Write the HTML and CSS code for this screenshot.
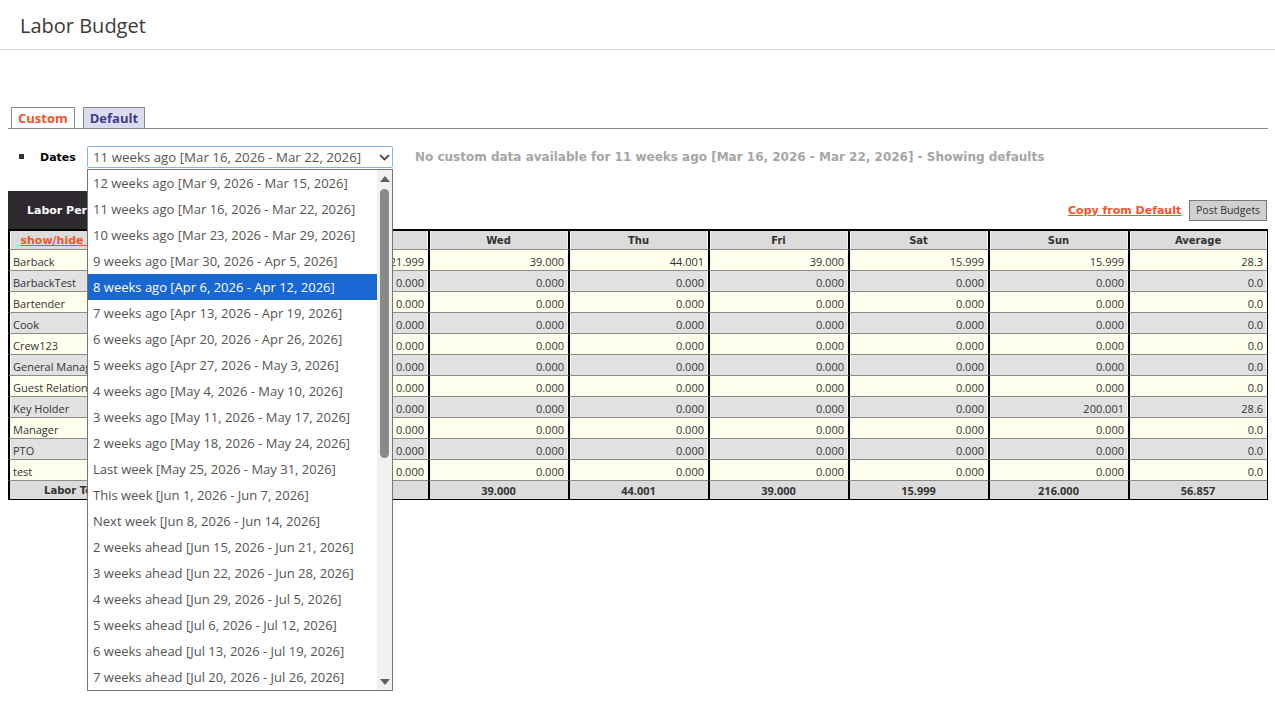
FILE: index.html
```html
<!DOCTYPE html>
<html lang="en">

<head>
    <meta charset="UTF-8">
    <title>Labor Budget</title>
    <link rel="stylesheet" href="styles.css">
</head>

<body>
    <header class="page-header">
        <h1>Labor Budget</h1>
    </header>

    <main class="content">
        <div class="tabs">
            <span class="tab tab-active">Custom</span>
            <span class="tab">Default</span>
        </div>

        <div class="dates-row">
            <span class="bullet"></span>
            <span class="dates-label">Dates</span>
            <div class="select-wrap">
                <div class="select">
                    <span>11 weeks ago [Mar 16, 2026 - Mar 22, 2026]</span>
                    <svg class="chevron" width="11" height="7" viewBox="0 0 11 7"><path d="M1 1.2l4.5 4.3 4.5-4.3" fill="none" stroke="#444" stroke-width="1.8"/></svg>
                </div>
                <div class="dropdown">
                    <ul class="options">
                        <li>12 weeks ago [Mar 9, 2026 - Mar 15, 2026]</li>
                        <li>11 weeks ago [Mar 16, 2026 - Mar 22, 2026]</li>
                        <li>10 weeks ago [Mar 23, 2026 - Mar 29, 2026]</li>
                        <li>9 weeks ago [Mar 30, 2026 - Apr 5, 2026]</li>
                        <li class="selected">8 weeks ago [Apr 6, 2026 - Apr 12, 2026]</li>
                        <li>7 weeks ago [Apr 13, 2026 - Apr 19, 2026]</li>
                        <li>6 weeks ago [Apr 20, 2026 - Apr 26, 2026]</li>
                        <li>5 weeks ago [Apr 27, 2026 - May 3, 2026]</li>
                        <li>4 weeks ago [May 4, 2026 - May 10, 2026]</li>
                        <li>3 weeks ago [May 11, 2026 - May 17, 2026]</li>
                        <li>2 weeks ago [May 18, 2026 - May 24, 2026]</li>
                        <li>Last week [May 25, 2026 - May 31, 2026]</li>
                        <li>This week [Jun 1, 2026 - Jun 7, 2026]</li>
                        <li>Next week [Jun 8, 2026 - Jun 14, 2026]</li>
                        <li>2 weeks ahead [Jun 15, 2026 - Jun 21, 2026]</li>
                        <li>3 weeks ahead [Jun 22, 2026 - Jun 28, 2026]</li>
                        <li>4 weeks ahead [Jun 29, 2026 - Jul 5, 2026]</li>
                        <li>5 weeks ahead [Jul 6, 2026 - Jul 12, 2026]</li>
                        <li>6 weeks ahead [Jul 13, 2026 - Jul 19, 2026]</li>
                        <li>7 weeks ahead [Jul 20, 2026 - Jul 26, 2026]</li>
                    </ul>
                    <div class="scrollbar">
                        <span class="arrow-up"></span>
                        <span class="thumb"></span>
                        <span class="arrow-down"></span>
                    </div>
                </div>
            </div>
            <span class="notice">No custom data available for 11 weeks ago [Mar 16, 2026 - Mar 22, 2026] - Showing defaults</span>
        </div>

        <table class="budget">
            <colgroup>
                <col><col><col><col><col><col><col><col><col>
            </colgroup>
            <tr class="top-row">
                <td class="personnel">Labor Personnel</td>
                <td class="actions" colspan="8">
                    <a href="#" class="copy-link">Copy from Default</a>
                    <button class="post-btn">Post Budgets</button>
                </td>
            </tr>
            <tr class="head-row">
                <th><a href="#" class="toggle-link">show/hide inactive</a></th>
                <th>Mon</th><th>Tue</th><th>Wed</th><th>Thu</th><th>Fri</th><th>Sat</th><th>Sun</th><th>Average</th>
            </tr>
            <tr class="odd">
                <td class="name">Barback</td>
                <td>22.001</td><td>21.999</td><td>39.000</td><td>44.001</td><td>39.000</td><td>15.999</td><td>15.999</td><td>28.3</td>
            </tr>
            <tr class="even">
                <td class="name">BarbackTest</td>
                <td>0.000</td><td>0.000</td><td>0.000</td><td>0.000</td><td>0.000</td><td>0.000</td><td>0.000</td><td>0.0</td>
            </tr>
            <tr class="odd">
                <td class="name">Bartender</td>
                <td>0.000</td><td>0.000</td><td>0.000</td><td>0.000</td><td>0.000</td><td>0.000</td><td>0.000</td><td>0.0</td>
            </tr>
            <tr class="even">
                <td class="name">Cook</td>
                <td>0.000</td><td>0.000</td><td>0.000</td><td>0.000</td><td>0.000</td><td>0.000</td><td>0.000</td><td>0.0</td>
            </tr>
            <tr class="odd">
                <td class="name">Crew123</td>
                <td>0.000</td><td>0.000</td><td>0.000</td><td>0.000</td><td>0.000</td><td>0.000</td><td>0.000</td><td>0.0</td>
            </tr>
            <tr class="even">
                <td class="name">General Manager</td>
                <td>0.000</td><td>0.000</td><td>0.000</td><td>0.000</td><td>0.000</td><td>0.000</td><td>0.000</td><td>0.0</td>
            </tr>
            <tr class="odd">
                <td class="name">Guest Relations</td>
                <td>0.000</td><td>0.000</td><td>0.000</td><td>0.000</td><td>0.000</td><td>0.000</td><td>0.000</td><td>0.0</td>
            </tr>
            <tr class="even">
                <td class="name">Key Holder</td>
                <td>0.000</td><td>0.000</td><td>0.000</td><td>0.000</td><td>0.000</td><td>0.000</td><td>200.001</td><td>28.6</td>
            </tr>
            <tr class="odd">
                <td class="name">Manager</td>
                <td>0.000</td><td>0.000</td><td>0.000</td><td>0.000</td><td>0.000</td><td>0.000</td><td>0.000</td><td>0.0</td>
            </tr>
            <tr class="even">
                <td class="name">PTO</td>
                <td>0.000</td><td>0.000</td><td>0.000</td><td>0.000</td><td>0.000</td><td>0.000</td><td>0.000</td><td>0.0</td>
            </tr>
            <tr class="odd">
                <td class="name">test</td>
                <td>0.000</td><td>0.000</td><td>0.000</td><td>0.000</td><td>0.000</td><td>0.000</td><td>0.000</td><td>0.0</td>
            </tr>
            <tr class="total-row">
                <td class="total-label">Labor Totals</td>
                <td>22.001</td><td>21.999</td><td>39.000</td><td>44.001</td><td>39.000</td><td>15.999</td><td>216.000</td><td>56.857</td>
            </tr>
        </table>
    </main>
</body>

</html>
```

FILE: styles.css
```css
html,
body {
    min-height: 100vh;
}

body {
    margin: 0;
    font-family: 'Open Sans', 'Liberation Sans', sans-serif;
    color: #333;
    background: #fff;
}

.page-header {
    height: 50px;
    border-bottom: 1px solid #d4d4d4;
    padding: 2px 0 0 20px;
    box-sizing: border-box;
    display: flex;
    align-items: center;
}

.page-header h1 {
    margin: 0;
    font-size: 20px;
    font-weight: 400;
    color: #3a3a3a;
}

.content {
    padding: 57px 7px 0 8px;
}

/* tabs */
.tabs {
    display: flex;
    gap: 8px;
    padding-left: 3px;
    height: 21px;
    border-bottom: 1px solid #8a8a8a;
}

.tab {
    height: 21px;
    border: 1px solid #8a8a8a;
    border-bottom: none;
    padding: 0 6px;
    font-size: 13px;
    font-weight: 700;
    line-height: 21px;
    color: #3d3d8f;
    background: #dcdcf0;
    box-sizing: border-box;
}

.tab-active {
    color: #f0552a;
    background: #fff;
}

/* dates row */
.dates-row {
    display: flex;
    align-items: center;
    height: 22px;
    margin-top: 17px;
}

.bullet {
    width: 5px;
    height: 5px;
    background: #333;
    margin-left: 11px;
    margin-top: -2px;
}

.dates-label {
    font-family: 'DejaVu Sans', sans-serif;
    font-size: 11px;
    font-weight: 700;
    color: #000;
    margin-left: 16px;
    width: 47px;
}

.select-wrap {
    position: relative;
    width: 306px;
    height: 22px;
}

.select {
    height: 22px;
    box-sizing: border-box;
    border: 1px solid #86b2dc;
    border-radius: 2px;
    padding: 0 2px 0 5px;
    display: flex;
    align-items: center;
    justify-content: space-between;
    font-size: 13.3px;
    color: #555;
}

.chevron {
    margin-top: 1px;
}

.dropdown {
    position: absolute;
    top: 23px;
    left: 0;
    width: 306px;
    height: 522px;
    box-sizing: border-box;
    border: 1px solid #767676;
    background: #fff;
    z-index: 10;
}

.options {
    list-style: none;
    margin: 0;
    padding: 0;
    width: 289px;
}

.options li {
    height: 26px;
    line-height: 26px;
    padding-left: 5px;
    font-size: 13px;
    color: #555;
    white-space: nowrap;
}

.options li.selected {
    background: #1967d2;
    color: #fff;
}

.scrollbar {
    position: absolute;
    top: 0;
    right: 0;
    width: 15px;
    height: 520px;
    background: #f1f1f1;
    display: flex;
    flex-direction: column;
    align-items: center;
}

.arrow-up {
    margin-top: 6px;
    border-left: 5px solid transparent;
    border-right: 5px solid transparent;
    border-bottom: 6px solid #606060;
}

.thumb {
    margin-top: 7px;
    width: 9px;
    height: 269px;
    border-radius: 5px;
    background: #8a8a8a;
}

.arrow-down {
    margin-top: auto;
    margin-bottom: 5px;
    border-left: 5px solid transparent;
    border-right: 5px solid transparent;
    border-top: 6px solid #606060;
}

.notice {
    margin-left: 22px;
    font-family: 'DejaVu Sans', sans-serif;
    font-size: 12px;
    font-weight: 700;
    color: #a5a5a5;
    white-space: nowrap;
}

/* budget table */
.budget {
    margin-top: 23px;
    width: 1260px;
    table-layout: fixed;
    border-collapse: separate;
    border-spacing: 0;
    font-size: 11px;
}

.budget col {
    width: 140px;
}

.budget td,
.budget th {
    padding: 0 4px 0 3px;
    white-space: nowrap;
    overflow: hidden;
}

.top-row td {
    height: 38px;
}

.personnel {
    background: #2d292f;
    color: #fff;
    font-family: 'DejaVu Sans', sans-serif;
    font-weight: 700;
    font-size: 11px;
    text-align: center;
}

.actions {
    text-align: right;
    vertical-align: middle;
}

.budget .actions {
    padding-right: 1px;
}

.copy-link {
    font-family: 'DejaVu Sans', sans-serif;
    font-size: 11px;
    font-weight: 700;
    color: #f0552a;
    vertical-align: middle;
}

.post-btn {
    margin-left: 5px;
    width: 78px;
    height: 21px;
    padding: 0;
    border: 1px solid #7a7a7a;
    background: #d0d0d0;
    font-family: 'Open Sans', sans-serif;
    font-size: 10.5px;
    color: #333;
    vertical-align: middle;
}

.head-row th {
    height: 18px;
    background: #dcdcdc;
    border-top: 2px solid #000;
    border-left: 2px solid #000;
    font-family: 'DejaVu Sans', sans-serif;
    font-size: 10px;
    font-weight: 700;
    text-align: center;
    box-shadow: inset 1px 0 0 #f4f4f4, inset -1px 0 0 #f4f4f4;
}

.head-row th:last-child {
    border-right: 1px solid #000;
}

.toggle-link {
    font-size: 11px;
    color: #f0552a;
}

.odd td,
.even td,
.total-row td {
    height: 18px;
    padding-top: 2px;
    border-left: 2px solid #000;
    border-top: 1px solid #8c8c8c;
    text-align: right;
    box-shadow: inset 1px 0 0 #f6f6f6, inset -1px 0 0 #f6f6f6;
}

.odd td:last-child,
.even td:last-child,
.total-row td:last-child {
    border-right: 1px solid #000;
}

.odd td {
    background: #ffffee;
}

.even td {
    background: #e1e1e1;
}

.budget td.name {
    text-align: left;
}

.total-row td {
    height: 18px;
    padding-top: 0;
    background: #dcdcdc;
    border-bottom: 1px solid #000;
    font-weight: 700;
    text-align: center;
    box-shadow: none;
}

.total-label {
    font-family: 'DejaVu Sans', sans-serif;
    font-size: 10px;
}
```
